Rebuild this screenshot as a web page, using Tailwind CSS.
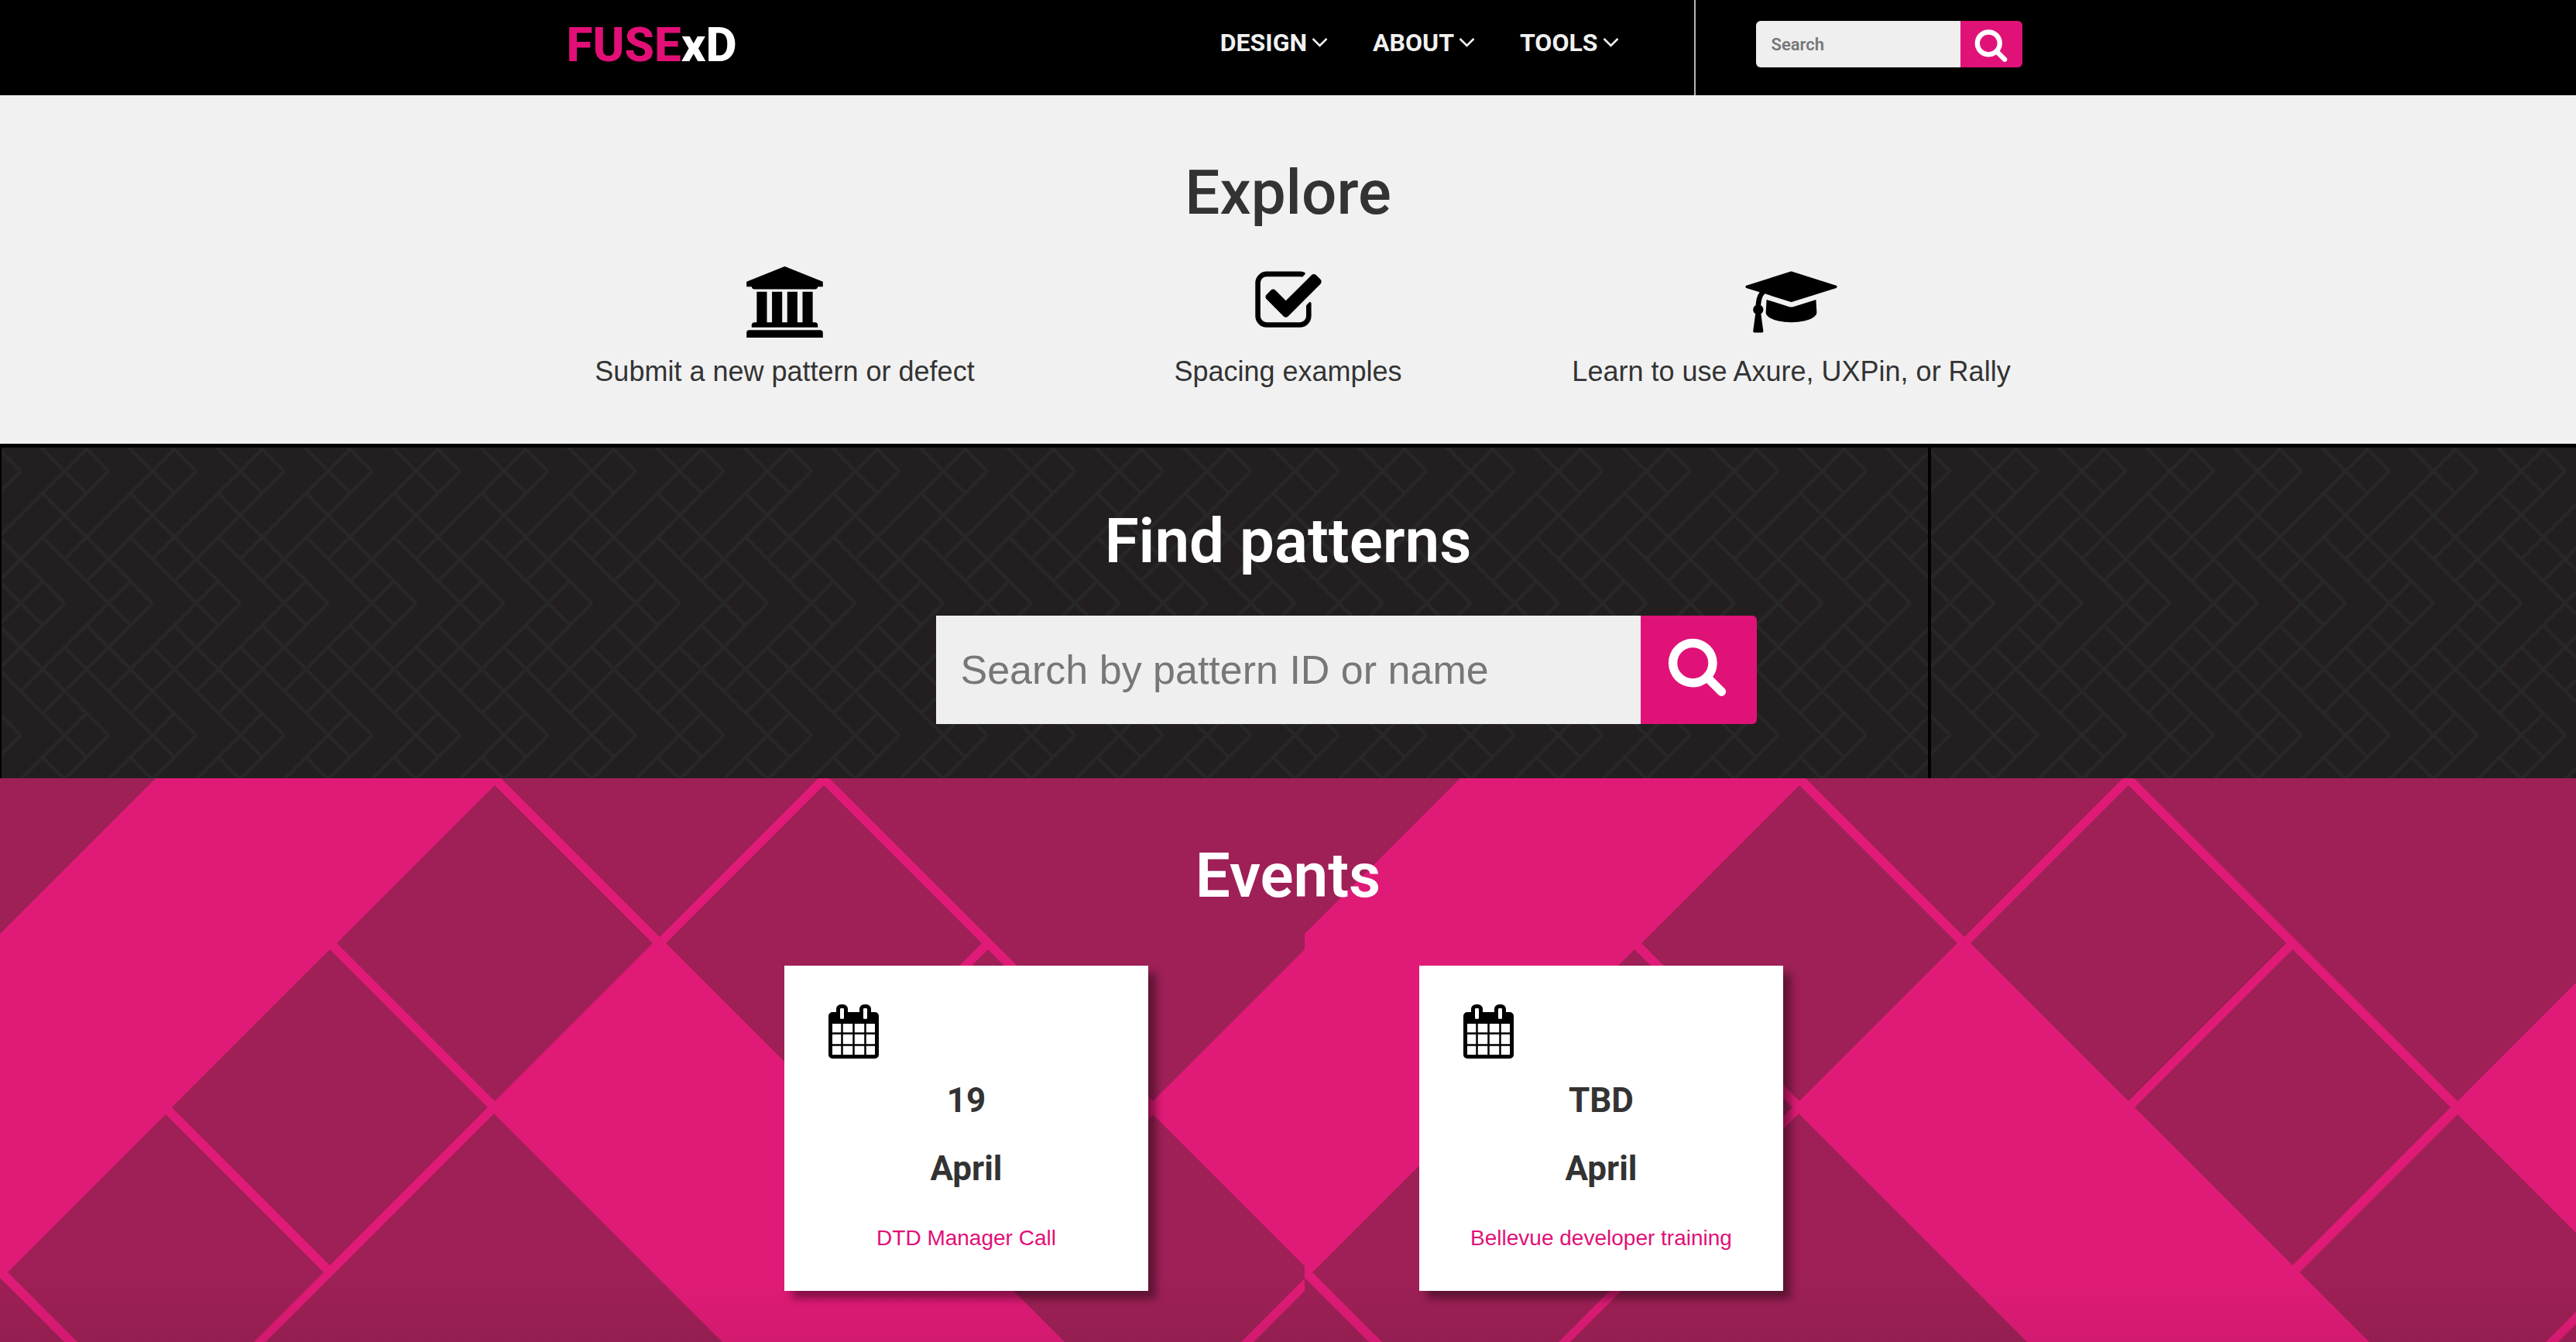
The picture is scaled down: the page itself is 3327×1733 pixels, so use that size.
<!DOCTYPE html>
<html lang="en">
<head>
<meta charset="utf-8">
<title>FUSExD</title>
<script src="https://cdn.jsdelivr.net/npm/@tailwindcss/browser@4"></script>
</head>
<body class="flex min-h-screen flex-col bg-[#f1f1f1] font-['Liberation_Sans',Arial,sans-serif] text-[#333]">

<svg class="hidden" aria-hidden="true">
  <symbol id="search" viewBox="0 0 1792 1792"><path d="M1216 832q0-185-131.500-316.500t-316.500-131.500-316.500 131.500-131.500 316.500 131.500 316.500 316.500 131.500 316.500-131.500 131.500-316.500zm512 832q0 52-38 90t-90 38q-54 0-90-38l-343-342q-179 124-399 124-143 0-273.500-55.500t-225-150-150-225-55.500-273.500 55.500-273.500 150-225 225-150 273.500-55.500 273.500 55.500 225 150 150 225 55.500 273.500q0 220-124 399l343 343q37 37 37 90z"/></symbol>
  <symbol id="chevron" viewBox="0 0 20 12"><path d="M1 1l9 9 9-9" fill="none" stroke="#f1f1f1" stroke-width="2.500"/></symbol>
  <symbol id="calendar" viewBox="0 0 1792 1792"><path d="M192 1664h288v-288h-288v288zm352 0h320v-288h-320v288zm-352-352h288v-320h-288v320zm352 0h320v-320h-320v320zm-352-384h288v-288h-288v288zm736 736h320v-288h-320v288zm-384-736h320v-288h-320v288zm768 736h288v-288h-288v288zm-384-352h320v-320h-320v320zm-352-864v-288q0-13-9.500-22.500t-22.500-9.500h-64q-13 0-22.500 9.500t-9.500 22.500v288q0 13 9.500 22.500t22.500 9.500h64q13 0 22.500-9.500t9.500-22.500zm736 864h288v-320h-288v320zm-384-384h320v-288h-320v288zm384 0h288v-288h-288v288zm32-480v-288q0-13-9.500-22.500t-22.500-9.500h-64q-13 0-22.500 9.500t-9.500 22.500v288q0 13 9.500 22.500t22.500 9.500h64q13 0 22.500-9.500t9.500-22.500zm384-64v1280q0 52-38 90t-90 38h-1408q-52 0-90-38t-38-90v-1280q0-52 38-90t90-38h128v-96q0-66 47-113t113-47h64q66 0 113 47t47 113v96h384v-96q0-66 47-113t113-47h64q66 0 113 47t47 113v96h128q52 0 90 38t38 90z" transform="translate(-64 0)" fill-rule="evenodd"/></symbol>
</svg>

<header class="bg-black">
  <div class="mx-auto flex h-[123px] max-w-[1896px] justify-between pl-4">
    <a href="#" class="pt-[13px] font-[Roboto,sans-serif] text-[62px] leading-[90px] font-extrabold text-[#e20f77]">FUSE<span class="text-white">xD</span></a>
    <div class="flex">
      <nav class="flex gap-[58px] pr-[97px] font-[Roboto,sans-serif] text-[32px] leading-[110px] font-bold text-[#f1f1f1]">
        <a href="#" class="flex items-center gap-1.5 self-start">DESIGN <svg class="h-3 w-[21px]"><use href="#chevron"/></svg></a>
        <a href="#" class="flex items-center gap-1.5 self-start">ABOUT <svg class="h-3 w-[21px]"><use href="#chevron"/></svg></a>
        <a href="#" class="flex items-center gap-1.5 self-start">TOOLS <svg class="h-3 w-[21px]"><use href="#chevron"/></svg></a>
      </nav>
      <form class="flex border-l-2 border-[#b5b5b5] pt-[27px] pl-[78px]">
        <input type="search" aria-label="Search" placeholder="Search" class="h-[60px] w-[264px] rounded-l-md bg-[#efefef] px-5 font-[Roboto,sans-serif] text-[22px] font-semibold placeholder:text-[#777]">
        <button type="button" aria-label="Search" class="flex h-[60px] w-20 items-center justify-center rounded-r-md bg-[#e01277]"><svg class="size-[45px] fill-white"><use href="#search"/></svg></button>
      </form>
    </div>
  </div>
</header>

<section class="h-[450px] pt-[76px] text-center">
  <h2 class="font-[Roboto,sans-serif] text-[80px] leading-[100px] font-medium">Explore</h2>
  <div class="mx-auto mt-[45px] grid max-w-[1950px] grid-cols-3 text-[36px] leading-[40px]">
    <a href="#" class="flex flex-col items-center gap-6">
      <svg class="h-[92px] w-[99px]" viewBox="0 0 1920 1792"><path d="M960 0l960 384v128h-128q0 26-20.500 45t-48.500 19h-1526q-28 0-48.500-19t-20.500-45h-128v-128zm-704 640h256v768h128v-768h256v768h128v-768h256v768h128v-768h256v768h59q28 0 48.500 19t20.500 45v64h-1664v-64q0-26 20.500-45t48.500-19h59v-768zm1595 960q28 0 48.500 19t20.500 45v128h-1920v-128q0-26 20.500-45t48.500-19h1782z"/></svg>
      Submit a new pattern or defect
    </a>
    <a href="#" class="flex flex-col items-center gap-6">
      <svg class="size-[92px]" viewBox="64 0 1664 1792"><path d="M1472 930v318q0 119-84.500 203.500t-203.500 84.500h-832q-119 0-203.500-84.500t-84.500-203.500v-832q0-119 84.500-203.500t203.500-84.500h832q63 0 117 25 15 7 18 23 3 17-9 29l-49 49q-10 10-23 10-3 0-9-2-23-6-45-6h-832q-66 0-113 47t-47 113v832q0 66 47 113t113 47h832q66 0 113-47t47-113v-254q0-13 9-22l64-64q10-10 23-10 6 0 12 3 20 8 20 29zm231-489l-814 814q-24 24-57 24t-57-24l-430-430q-24-24-24-57t24-57l110-110q24-24 57-24t57 24l263 263 647-647q24-24 57-24t57 24l110 110q24 24 24 57t-24 57z"/></svg>
      Spacing examples
    </a>
    <a href="#" class="flex flex-col items-center gap-6">
      <svg class="h-[92px] w-[119px]" viewBox="0 0 2304 1792"><path d="M1774 836l18 316q4 69-82 128t-235 93.500-323 34.500-323-34.500-235-93.500-82-128l18-316 574 181q22 7 48 7t48-7zm530-324q0 23-22 31l-1120 352q-4 1-10 1t-10-1l-652-206q-43 34-71 111.500t-34 178.500q63 36 63 109 0 69-58 107l58 433q2 14-8 25-9 11-24 11h-192q-15 0-24-11-10-11-8-25l58-433q-58-38-58-107 0-73 65-111 11-207 98-330l-333-104q-22-8-22-31t22-31l1120-352q4-1 10-1t10 1l1120 352q22 8 22 31z"/></svg>
      Learn to use Axure, UXPin, or Rally
    </a>
  </div>
</section>

<section class="relative h-[432px] bg-[#231f20] pt-[76px] text-center">
  <svg class="absolute inset-0 size-full" aria-hidden="true">
    <defs>
      <g id="weave" stroke="#282828" stroke-width=".14" fill="none"><path d="M0 2l5 5M-1 3l5 5M7 1l-5 5M6 0l-5 5"/></g>
      <pattern id="mesh" x="55" y="7" width="113.500" height="341" patternUnits="userSpaceOnUse" viewBox="0 0 4 12" preserveAspectRatio="none">
        <use href="#weave" x="-4"/><use href="#weave"/><use href="#weave" x="-6" y="6"/><use href="#weave" x="-2" y="6"/><use href="#weave" x="2" y="6"/><use href="#weave" x="-6" y="-6"/><use href="#weave" x="-2" y="-6"/><use href="#weave" x="2" y="-6"/>
      </pattern>
      <pattern id="panel" width="2492" height="440" patternUnits="userSpaceOnUse">
        <rect width="2492" height="440" fill="url(#mesh)"/>
        <path d="M1 0v440M2491 0v440" stroke="#000" stroke-width="2"/>
      </pattern>
    </defs>
    <rect width="100%" height="100%" fill="url(#panel)"/>
    <rect width="100%" height="5" fill="#000"/>
  </svg>
  <div class="relative">
    <h2 class="font-[Roboto,sans-serif] text-[80px] leading-[100px] font-semibold text-white">Find patterns</h2>
    <form class="mt-[46px] ml-[150px] flex justify-center">
      <input type="search" aria-label="Search by pattern ID or name" placeholder="Search by pattern ID or name" class="h-[140px] w-[910px] bg-[#efefef] px-8 text-[52px] placeholder:text-[#777]">
      <button type="button" aria-label="Search patterns" class="flex h-[140px] w-[150px] items-center justify-center rounded-r-md bg-[#e01277] pr-1 pb-3"><svg class="size-20 fill-white"><use href="#search"/></svg></button>
    </form>
  </div>
</section>

<section class="relative flex-1 bg-[#e01b77] pt-[76px] pb-[66px] text-center">
  <svg class="absolute inset-0 size-full" aria-hidden="true">
    <defs>
      <pattern id="lattice" width="1685" height="1000" patternUnits="userSpaceOnUse">
        <path fill="#9e2056" d="M0 0H201L0 201zM639 9l204 204-204 204-204-204zM426 221l204 204-204 204-204-204zM214 434l204 204-204 204-204-204zM0 645l355 355H0zM647 0h410L852 205zM1064 9l204 204-204 204-204-204zM1276 221l204 204-204 204-204-204zM1489 434l204 204-204 204-204-204zM1071 0h614v221l-196 196zM638 433l567 567H71zM1700 647l-353 353h353z"/>
      </pattern>
      <linearGradient id="fade" x2="0" y2="1"><stop offset=".88" stop-opacity="0"/><stop offset="1" stop-opacity=".06"/></linearGradient>
    </defs>
    <rect width="100%" height="100%" fill="url(#lattice)"/>
    <rect width="100%" height="100%" fill="url(#fade)"/>
  </svg>
  <div class="relative">
    <h2 class="font-[Roboto,sans-serif] text-[80px] leading-[100px] font-semibold text-white">Events</h2>
    <div class="mt-[66px] flex justify-center gap-[350px] pr-[11px]">
      <article class="h-[420px] w-[470px] bg-white pt-[50px] shadow-[10px_10px_10px_rgba(0,0,0,0.4)]">
        <svg class="ml-[57px] h-[70px] w-[70px]"><use href="#calendar"/></svg>
        <div class="mt-[10px] font-[Roboto,sans-serif] text-[44px] leading-[88px] font-bold"><p>19</p><p>April</p></div>
        <a href="#" class="mt-[26px] block text-[28px] leading-[40px] text-[#e20f77]">DTD Manager Call</a>
      </article>
      <article class="h-[420px] w-[470px] bg-white pt-[50px] shadow-[10px_10px_10px_rgba(0,0,0,0.4)]">
        <svg class="ml-[57px] h-[70px] w-[70px]"><use href="#calendar"/></svg>
        <div class="mt-[10px] font-[Roboto,sans-serif] text-[44px] leading-[88px] font-bold"><p>TBD</p><p>April</p></div>
        <a href="#" class="mt-[26px] block text-[28px] leading-[40px] text-[#e20f77]">Bellevue developer training</a>
      </article>
    </div>
  </div>
</section>
</body>
</html>
